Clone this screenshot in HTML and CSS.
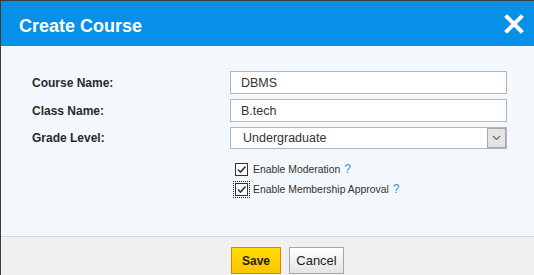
FILE: index.html
```html
<!DOCTYPE html>
<html lang="en">
<head>
	<meta charset="UTF-8">
	<title>Create Course</title>
	<link rel="stylesheet" href="styles.css">
</head>
<body>
	<div class="dialog">
		<div class="head">
			<h1>Create Course</h1>
			<span class="close">
				<svg width="20" height="20" viewBox="0 0 20 20">
					<path d="M3 3 L17 17 M17 3 L3 17" stroke="#fff" stroke-width="4" stroke-linecap="square"/>
				</svg>
			</span>
		</div>

		<div class="main">
			<div class="row">
				<label class="lab">Course Name:</label>
				<input class="txt" type="text" value="DBMS">
			</div>
			<div class="row">
				<label class="lab">Class Name:</label>
				<input class="txt" type="text" value="B.tech">
			</div>
			<div class="row sel-row">
				<label class="lab">Grade Level:</label>
				<div class="sel">
					<span class="sel-val">Undergraduate</span>
					<span class="arrow">
						<svg width="9" height="6" viewBox="0 0 9 6">
							<path d="M1 1 L4.5 4.5 L8 1" fill="none" stroke="#666" stroke-width="1.2"/>
						</svg>
					</span>
				</div>
			</div>

			<div class="checks">
				<div class="chk">
					<span class="box">
						<svg width="11" height="11" viewBox="0 0 11 11">
							<path d="M2 5.5 L4.5 8 L9.5 2.5" fill="none" stroke="#333" stroke-width="1.6"/>
						</svg>
					</span>
					Enable Moderation <span class="help">?</span>
				</div>
				<div class="chk">
					<span class="box focus">
						<svg width="11" height="11" viewBox="0 0 11 11">
							<path d="M2 5.5 L4.5 8 L9.5 2.5" fill="none" stroke="#333" stroke-width="1.6"/>
						</svg>
					</span>
					Enable Membership Approval <span class="help">?</span>
				</div>
			</div>
		</div>

		<div class="foot">
			<button class="btn save">Save</button>
			<button class="btn cancel">Cancel</button>
		</div>
	</div>
</body>
</html>
```

FILE: styles.css
```css
/*common*/
*{
	margin: 0;
	padding: 0;
	box-sizing: border-box;
}
body{
	font-family: "Liberation Sans", Arial, sans-serif;
	background-color: #f0f0f0;
}
.dialog{
	width: 534px;
	height: 275px;
	border-top: 1px solid #3c3c3c;
	border-left: 1px solid #3c3c3c;
	overflow: hidden;
}

/*header*/
.head{
	height: 45px;
	background-color: #0790e8;
	display: flex;
	justify-content: space-between;
	align-items: flex-start;
	padding: 0 10px 0 18px;
}
.head h1{
	font-size: 18px;
	line-height: 22px;
	font-weight: bold;
	color: #fff;
	margin-top: 14px;
}
.head .close{
	display: block;
	width: 20px;
	height: 20px;
	margin-top: 13px;
}
.head .close svg{
	display: block;
}

/*form*/
.main{
	height: 190px;
	background-color: #f3f8fc;
	padding: 25px 0 0 31px;
}
.row{
	display: flex;
	align-items: center;
	margin-bottom: 5px;
}
.sel-row{
	margin-top: 1px;
}
.lab{
	width: 198px;
	font-size: 12px;
	font-weight: bold;
	color: #2a2a2a;
}
.txt{
	width: 277px;
	height: 23px;
	border: 1px solid #b6b6b6;
	background-color: #fff;
	padding: 0 10px;
	font-family: "Liberation Sans", Arial, sans-serif;
	font-size: 12.5px;
	color: #333;
	outline: none;
}
.sel{
	width: 277px;
	height: 22px;
	border: 1px solid #b6b6b6;
	background-color: #fff;
	display: flex;
	align-items: stretch;
}
.sel-val{
	flex: 1;
	padding-left: 12px;
	font-size: 12.5px;
	line-height: 20px;
	color: #333;
}
.sel .arrow{
	width: 19px;
	background-color: #e4e4e4;
	border: 1px solid #a8a8a8;
	display: flex;
	align-items: center;
	justify-content: center;
}

/*checkboxes*/
.checks{
	margin: 10px 0 0 203px;
}
.chk{
	display: flex;
	align-items: center;
	height: 20px;
	font-size: 10.4px;
	color: #333;
}
.box{
	width: 13px;
	height: 13px;
	border: 1px solid #333;
	background-color: #fff;
	margin-right: 5px;
	display: flex;
	align-items: center;
	justify-content: center;
}
.box.focus{
	outline: 1px dotted #222;
	outline-offset: 1px;
}
.help{
	color: #3d8fd4;
	font-size: 12px;
	margin-left: 4px;
}

/*footer*/
.foot{
	border-top: 1px solid #d6d6d6;
	padding: 10px 0 0 40px;
	display: flex;
	justify-content: center;
	gap: 8px;
}
.btn{
	height: 27px;
	font-family: "Liberation Sans", Arial, sans-serif;
	font-size: 12px;
	color: #222;
}
.save{
	width: 50px;
	font-weight: bold;
	border: 1px solid #e08300;
	background: linear-gradient(#ffdc00, #ffc200);
}
.cancel{
	width: 55px;
	font-size: 13px;
	border: 1px solid #a6a6a6;
	background: linear-gradient(#ffffff, #e4e4e4);
}
```
